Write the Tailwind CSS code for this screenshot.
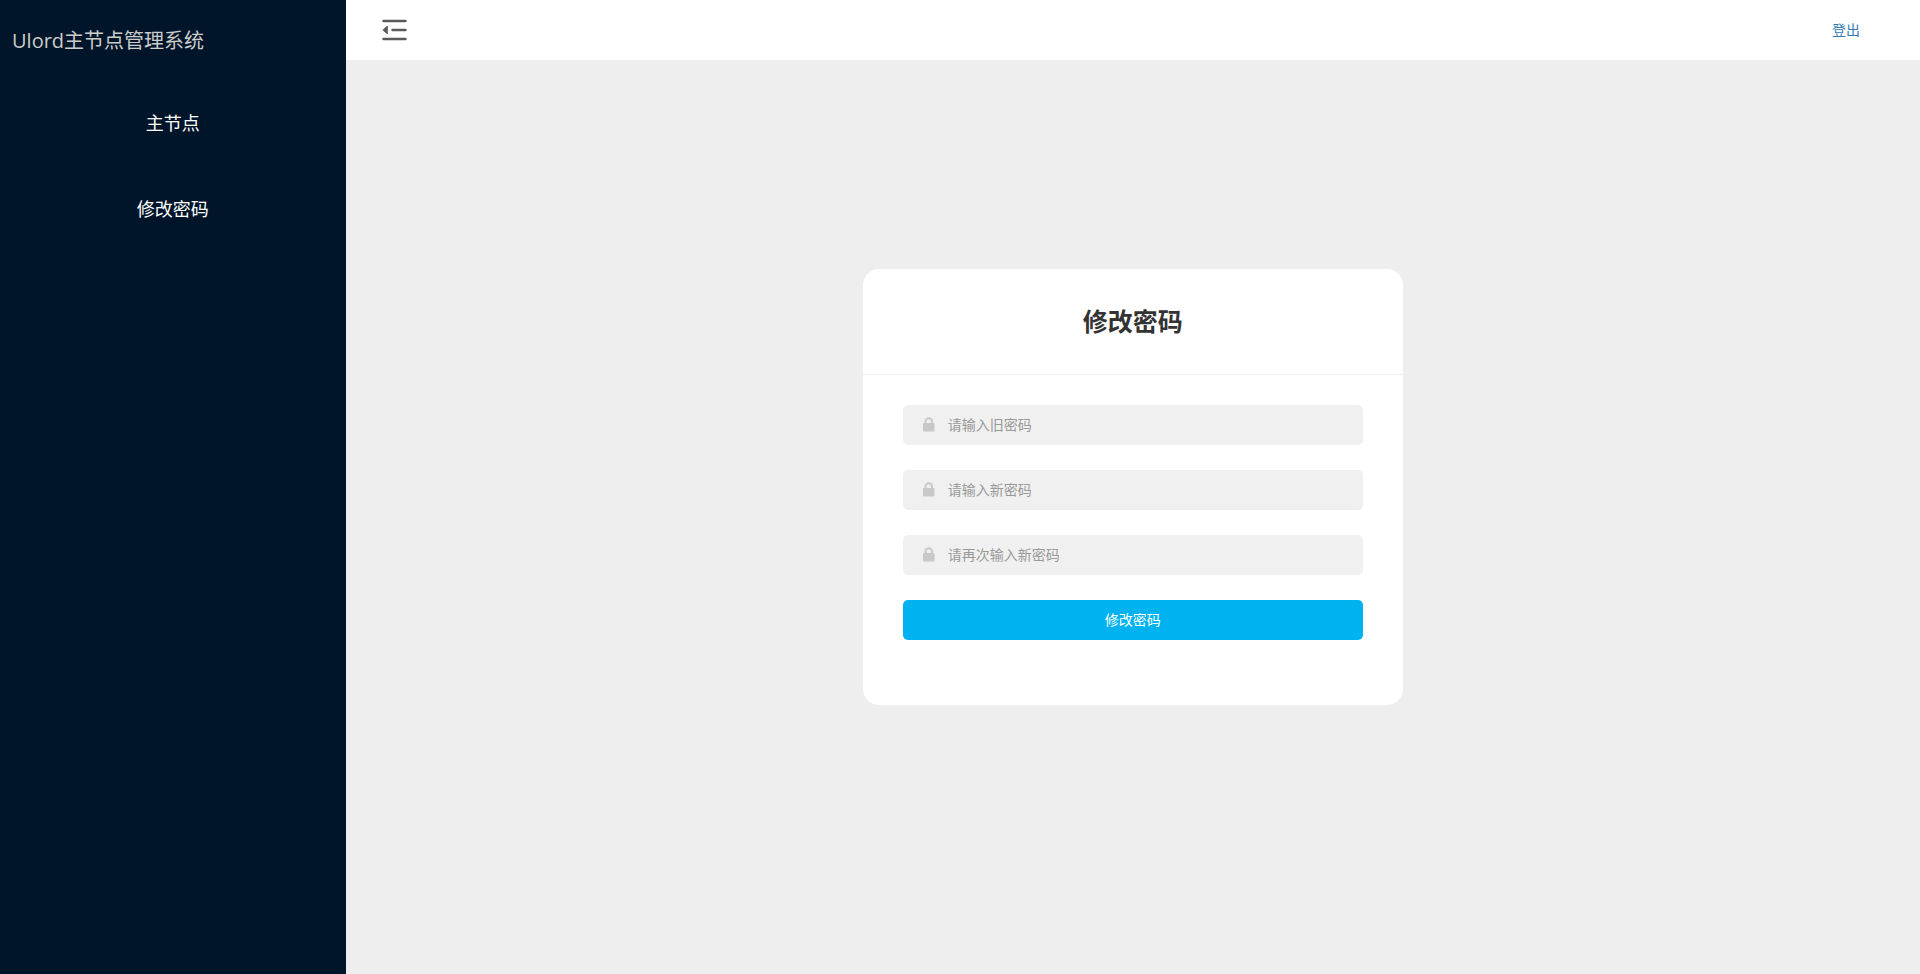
<!DOCTYPE html>
<html lang="zh-CN">
<head>
<meta charset="utf-8">
<meta name="viewport" content="width=device-width, initial-scale=1">
<title>Ulord主节点管理系统</title>
<script src="https://cdn.jsdelivr.net/npm/@tailwindcss/browser@4"></script>
</head>
<body class="flex min-h-screen bg-[#eeeeee] font-['Open_Sans','Noto_Sans_CJK_SC',sans-serif] text-sm text-[#333333]">
  <aside class="w-[18%] shrink-0 bg-[#001529]">
    <h1 class="px-3 pt-6 text-xl leading-[34px] text-[#cccccc]">Ulord主节点管理系统</h1>
    <nav class="mt-[22px] flex flex-col text-center text-lg text-white">
      <a href="#nodes" class="py-[29px]">主节点</a>
      <a href="#password" class="py-[29px]">修改密码</a>
    </nav>
  </aside>

  <div class="flex min-w-0 flex-1 flex-col">
    <header class="flex h-[60px] items-center justify-between bg-white pr-[60px] pl-9">
      <button type="button" aria-label="收起菜单" class="cursor-pointer text-[#5a5a5a]">
        <svg class="h-6 w-[25px]" viewBox="0 0 25 24" fill="none" stroke="currentColor" stroke-width="2.500" stroke-linecap="round">
          <path d="M1.500 3H23.500M10.500 12H23.500M1.500 21H23.500"/>
          <path d="M5.800 8V16L4.800 16L0.500 12L4.800 8Z" fill="currentColor" stroke="none"/>
        </svg>
      </button>
      <a href="#logout" class="text-[#337ab7]">登出</a>
    </header>

    <main class="flex flex-1 items-center justify-center pb-[60px]">
      <section class="w-[540px] rounded-2xl bg-white">
        <h2 class="border-b border-[#eeeeee] py-9 text-center text-[25px] leading-[33px] font-bold">修改密码</h2>
        <form class="flex flex-col gap-[25px] px-10 pt-[30px] pb-[65px]">
          <label class="flex h-10 items-center gap-[13px] rounded-[5px] bg-[#f0f0f0] pr-4 pl-5">
            <svg class="h-4 w-3 shrink-0" viewBox="0 0 12 16" aria-hidden="true"><path d="M2.500 7V4.500A3.250 3.250 0 0 1 9 4.500V7" fill="none" stroke="#c8c8c8" stroke-width="2"/><rect x="0" y="6" width="11.500" height="8.500" rx="1" fill="#c8c8c8"/></svg>
            <input type="password" aria-label="旧密码" placeholder="请输入旧密码" class="min-w-0 flex-1 bg-transparent outline-none placeholder:text-[#999999]">
          </label>
          <label class="flex h-10 items-center gap-[13px] rounded-[5px] bg-[#f0f0f0] pr-4 pl-5">
            <svg class="h-4 w-3 shrink-0" viewBox="0 0 12 16" aria-hidden="true"><path d="M2.500 7V4.500A3.250 3.250 0 0 1 9 4.500V7" fill="none" stroke="#c8c8c8" stroke-width="2"/><rect x="0" y="6" width="11.500" height="8.500" rx="1" fill="#c8c8c8"/></svg>
            <input type="password" aria-label="新密码" placeholder="请输入新密码" class="min-w-0 flex-1 bg-transparent outline-none placeholder:text-[#999999]">
          </label>
          <label class="flex h-10 items-center gap-[13px] rounded-[5px] bg-[#f0f0f0] pr-4 pl-5">
            <svg class="h-4 w-3 shrink-0" viewBox="0 0 12 16" aria-hidden="true"><path d="M2.500 7V4.500A3.250 3.250 0 0 1 9 4.500V7" fill="none" stroke="#c8c8c8" stroke-width="2"/><rect x="0" y="6" width="11.500" height="8.500" rx="1" fill="#c8c8c8"/></svg>
            <input type="password" aria-label="再次输入新密码" placeholder="请再次输入新密码" class="min-w-0 flex-1 bg-transparent outline-none placeholder:text-[#999999]">
          </label>
          <button type="submit" class="h-10 cursor-pointer rounded-[5px] bg-[#00b3f0] text-white">修改密码</button>
        </form>
      </section>
    </main>
  </div>
</body>
</html>
